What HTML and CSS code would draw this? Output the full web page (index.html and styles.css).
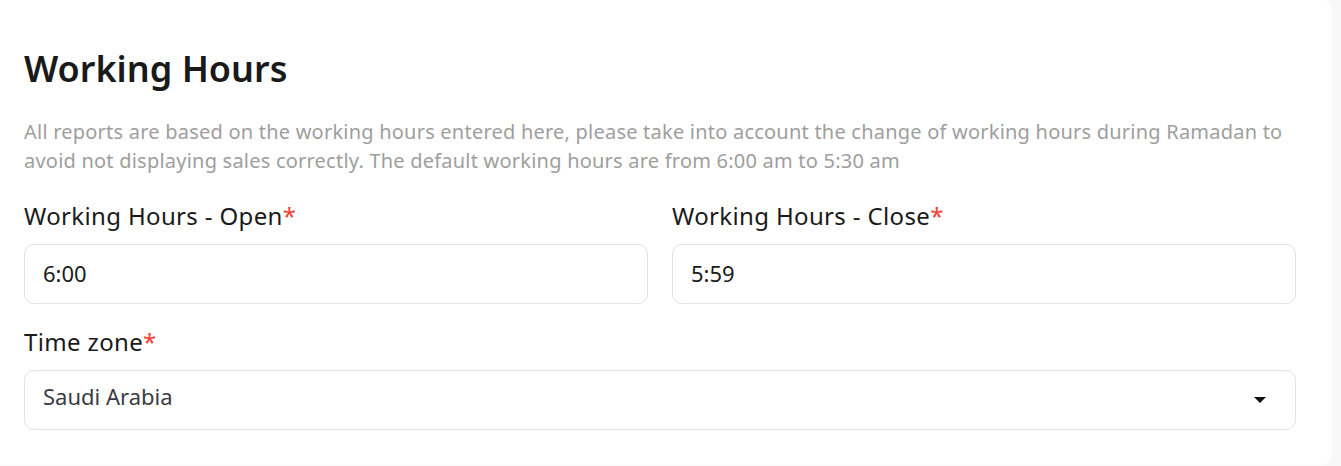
FILE: index.html
```html
<!DOCTYPE html>
<html lang="en">
<head>
<meta charset="utf-8">
<title>Working Hours</title>
<link rel="stylesheet" href="styles.css">
</head>
<body>
<div class="card">
  <h1 class="title">Working Hours</h1>
  <p class="desc">All reports are based on the working hours entered here, please take into account the change of working hours during Ramadan to avoid not displaying sales correctly. The default working hours are from 6:00 am to 5:30 am</p>
  <div class="row">
    <div class="field">
      <label class="label">Working Hours - Open<span class="req">*</span></label>
      <div class="input">6:00</div>
    </div>
    <div class="field">
      <label class="label">Working Hours - Close<span class="req">*</span></label>
      <div class="input">5:59</div>
    </div>
  </div>
  <div class="field tz">
    <label class="label">Time zone<span class="req">*</span></label>
    <div class="input select">
      <span class="select-value">Saudi Arabia</span>
      <svg class="arrow" width="12" height="6" viewBox="0 0 12 6"><path d="M0 0h12L6 6z" fill="#111"/></svg>
    </div>
  </div>
</div>
</body>
</html>
```
FILE: styles.css
```css
* { box-sizing: border-box; }
html, body { margin: 0; padding: 0; }
body {
  background: #f8f8f8;
  font-family: "Noto Sans", "Open Sans", sans-serif;
  color: #1a1a1a;
  width: 1341px;
  height: 466px;
  overflow: hidden;
}
.card {
  width: 1332px;
  height: 465px;
  background: #fff;
  border-radius: 0 10px 10px 0;
  padding: 45px 36px 35px 24px;
}
.title {
  margin: 0;
  font-size: 36px;
  line-height: 48px;
  font-weight: 600;
  color: #1a1a1a;
}
.desc {
  margin: 24px 0 0;
  font-size: 20px;
  line-height: 29px;
  letter-spacing: 0.22px;
  color: #9e9e9e;
}
.row {
  display: grid;
  grid-template-columns: 1fr 1fr;
  gap: 24px;
  margin-top: 25px;
}
.field {
  display: flex;
  flex-direction: column;
  gap: 12px;
}
.tz { margin-top: 22px; }
.label {
  font-size: 24px;
  line-height: 32px;
  letter-spacing: 0.35px;
  color: #1a1a1a;
}
.req { color: #f44336; }
.input {
  height: 60px;
  border: 1px solid #e3e3e3;
  border-radius: 10px;
  display: flex;
  align-items: center;
  padding: 0 18px 2px;
  font-size: 22px;
  color: #1a1a1a;
}
.select { justify-content: space-between; padding: 0 29px 9px 18px; }
.select-value { color: #3a3a44; }
.arrow { display: block; margin-top: 8px; }
```
